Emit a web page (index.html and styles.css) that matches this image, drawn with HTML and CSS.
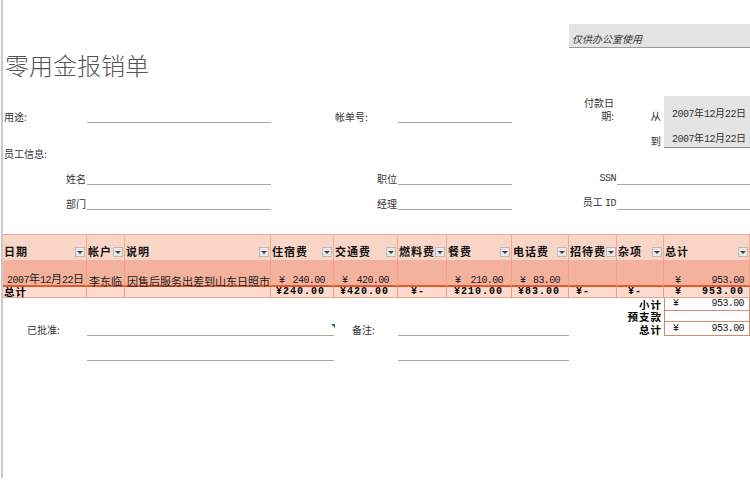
FILE: index.html
```html
<!DOCTYPE html>
<html lang="zh-CN">
<head>
<meta charset="utf-8">
<title>零用金报销单</title>
<link rel="stylesheet" href="styles.css">
</head>
<body>
<div class="sheet">
  <div class="row h24"></div>
  <div class="row h24">
    <div class="s8"></div>
    <div class="c s3 office">仅供办公室使用</div>
  </div>
  <div class="row h48">
    <div class="c s11 title">零用金报销单</div>
  </div>
  <div class="row h26">
    <div class="c lb l">用途:</div>
    <div class="c s2 line"></div>
    <div></div>
    <div class="c lb l">帐单号:</div>
    <div class="c s2 line"></div>
    <div></div>
    <div class="c lb r pay">付款日<br>期:</div>
    <div class="c lb r fr">从</div>
    <div class="c date"><span><span class="dg">2007</span>年<span class="dg">12</span>月<span class="dg">22</span>日</span></div>
  </div>
  <div class="row h26">
    <div class="s9"></div>
    <div class="c lb r fr">到</div>
    <div class="c date"><span><span class="dg">2007</span>年<span class="dg">12</span>月<span class="dg">22</span>日</span></div>
  </div>
  <div class="row h12">
    <div class="c s3 lb l">员工信息:</div>
  </div>
  <div class="row h25">
    <div class="c lb r">姓名</div>
    <div class="c s2 line"></div>
    <div></div>
    <div class="c lb r">职位</div>
    <div class="c s2 line"></div>
    <div></div>
    <div class="c lb r"><span class="mono">SSN</span></div>
    <div class="c s2 line"></div>
  </div>
  <div class="row h25">
    <div class="c lb r">部门</div>
    <div class="c s2 line"></div>
    <div></div>
    <div class="c lb r">经理</div>
    <div class="c s2 line"></div>
    <div></div>
    <div class="c lb r"><span>员工&nbsp;<span class="mono">ID</span></span></div>
    <div class="c s2 line"></div>
  </div>
  <div class="row h24"></div>

  <div class="row h26">
    <div class="c hd"><span>日期</span><span class="dd"></span></div>
    <div class="c hd"><span>帐户</span><span class="dd"></span></div>
    <div class="c hd"><span>说明</span><span class="dd"></span></div>
    <div class="c hd"><span>住宿费</span><span class="dd"></span></div>
    <div class="c hd"><span>交通费</span><span class="dd"></span></div>
    <div class="c hd"><span>燃料费</span><span class="dd"></span></div>
    <div class="c hd"><span>餐费</span><span class="dd"></span></div>
    <div class="c hd"><span>电话费</span><span class="dd"></span></div>
    <div class="c hd"><span>招待费</span><span class="dd"></span></div>
    <div class="c hd"><span>杂项</span><span class="dd"></span></div>
    <div class="c hd"><span>总计</span><span class="dd"></span></div>
  </div>
  <div class="row h27">
    <div class="c dt end"><span><span class="dg">2007</span>年<span class="dg">12</span>月<span class="dg">22</span>日</span></div>
    <div class="c dt">李东临</div>
    <div class="c dt">因售后服务出差到山东日照市</div>
    <div class="c dt money"><span class="m">¥</span><span class="m">240.00</span></div>
    <div class="c dt money"><span class="m">¥</span><span class="m">420.00</span></div>
    <div class="c dt"></div>
    <div class="c dt money"><span class="m">¥</span><span class="m">210.00</span></div>
    <div class="c dt money"><span class="m">¥</span><span class="m">83.00</span></div>
    <div class="c dt"></div>
    <div class="c dt"></div>
    <div class="c dt money last"><span class="m">¥</span><span class="m">953.00</span></div>
  </div>
  <div class="row h11">
    <div class="c tt">总计</div>
    <div class="c tt"></div>
    <div class="c tt"></div>
    <div class="c tt end"><span class="mb">¥240.00</span></div>
    <div class="c tt end"><span class="mb">¥420.00</span></div>
    <div class="c tt end dash"><span class="mb">¥-</span></div>
    <div class="c tt end"><span class="mb">¥210.00</span></div>
    <div class="c tt end"><span class="mb">¥83.00</span></div>
    <div class="c tt end dash2"><span class="mb">¥-</span></div>
    <div class="c tt end dash"><span class="mb">¥-</span></div>
    <div class="c tt money last"><span class="mb">¥</span><span class="mb">953.00</span></div>
  </div>
  <div class="row h12">
    <div class="s9"></div>
    <div class="c sl">小计</div>
    <div class="c sb"><span class="m">¥</span><span class="m">953.00</span></div>
  </div>
  <div class="row h12">
    <div class="s9"></div>
    <div class="c sl">预支款</div>
    <div class="c sb"></div>
  </div>
  <div class="row h14">
    <div class="c lb appr">已批准:</div>
    <div class="c s3 line tri"></div>
    <div class="c lb note">备注:</div>
    <div class="c s3 line"></div>
    <div></div>
    <div class="c sl">总计</div>
    <div class="c sb"><span class="m">¥</span><span class="m">953.00</span></div>
  </div>
  <div class="row h25">
    <div></div>
    <div class="c s3 line"></div>
    <div></div>
    <div class="c s3 line"></div>
  </div>
  <div class="row h117"></div>
</div>
</body>
</html>
```
FILE: styles.css
```css
* { box-sizing: border-box; }
html, body { margin: 0; padding: 0; background: #fff; }
body {
  font-family: "Noto Sans CJK SC", "Liberation Sans", sans-serif;
  font-size: 10px;
  color: #333;
}
.sheet {
  margin-left: 1px;
  width: 749px;
  height: 478px;
  border-left: 2px solid #c9c9c9;
}
.row {
  display: grid;
  grid-template-columns: 84px 38px 146px 63px 64px 49px 65px 57px 48px 47px 86px;
}
.h11 { height: 11px; }
.h12 { height: 12px; }
.h14 { height: 14px; }
.h24 { height: 24px; }
.h25 { height: 25px; }
.h26 { height: 26px; }
.h27 { height: 27px; }
.h48 { height: 48px; }
.h117 { height: 117px; }
.s2 { grid-column: span 2; }
.s3 { grid-column: span 3; }
.s8 { grid-column: span 8; }
.s9 { grid-column: span 9; }
.s11 { grid-column: span 11; }

.c {
  display: flex;
  align-items: flex-end;
  white-space: nowrap;
  min-width: 0;
  line-height: 12px;
}
.dg, .mono {
  font-family: "Liberation Mono", monospace;
  font-size: 10px;
  letter-spacing: -0.5px;
}
.office {
  background: #e4e4e4;
  border-bottom: 1px solid #9a9a9a;
  font-style: italic;
  color: #333;
  padding: 0 0 2px 3px;
}
.title {
  align-items: flex-start;
  font-size: 24px;
  line-height: 28px;
  font-weight: 300;
  color: #555;
  padding: 3px 0 0 2px;
}
.lb { color: #333; font-size: 10px; }
.l { padding-left: 1px; }
.r { justify-content: flex-end; padding-right: 1px; }
.pay { text-align: right; line-height: 13px; padding-right: 3px; padding-bottom: 1px; }
.fr { padding-right: 3px; font-size: 10.5px; padding-bottom: 1px; }
.line { border-bottom: 1px solid #a6a6a6; }
.date {
  background: #e4e4e4;
  border-bottom: 1px solid #8c8c8c;
  justify-content: flex-end;
  padding: 0 4px 1px 0;
  color: #333;
}
.appr { padding-left: 24px; padding-bottom: 0; }
.note { padding-left: 18px; }
.tri { position: relative; }
.tri::after {
  content: "";
  position: absolute;
  top: 2px;
  right: -1px;
  border-top: 4px solid #1e7b26;
  border-left: 4px solid transparent;
}

.hd {
  background: #f9d5c7;
  border-top: 1px solid #eeab91;
  border-right: 1px solid #eeab91;
  justify-content: space-between;
  padding: 0 1px 3px 1px;
  font-size: 11px;
  font-weight: bold;
  letter-spacing: 1px;
  color: #111;
}
.dd {
  width: 10px;
  height: 10px;
  flex: none;
  background: #e9e9e9;
  border: 1px solid #b9b9b9;
  display: flex;
  align-items: center;
  justify-content: center;
}
.dd::after {
  content: "";
  border-left: 3px solid transparent;
  border-right: 3px solid transparent;
  border-top: 3px solid #444;
}
.dt {
  background: #f4b29d;
  border-right: 1px solid #eda186;
  border-bottom: 2px solid #e5582a;
  font-size: 11px;
  line-height: 8px;
  color: #222;
  padding: 0 0 0 2px;
}
.end { justify-content: flex-end; padding-right: 8px; }
.dt.end { padding-right: 2px; }
.money { justify-content: space-between; padding: 0 8px 0 8px; }
.money.last { padding: 0 5px 0 11px; }
.m {
  font-family: "Liberation Mono", monospace;
  font-size: 10px;
  letter-spacing: -0.6px;
  color: #222;
}
.mb {
  font-family: "Liberation Mono", monospace;
  font-size: 10px;
  font-weight: bold;
  color: #000;
}
.tt {
  background: #fbdbcf;
  border-right: 1px solid #eda186;
  border-bottom: 1px solid #eda186;
  font-size: 10.5px;
  font-weight: bold;
  letter-spacing: 1px;
  line-height: 10px;
  color: #000;
  padding-left: 1px;
}
.tt.end { padding-right: 8px; }
.tt.dash { padding-right: 21px; }
.tt.dash2 { padding-right: 26px; }
.sl {
  justify-content: flex-end;
  align-items: center;
  padding-right: 2px;
  font-size: 10.5px;
  font-weight: bold;
  letter-spacing: 1px;
  line-height: 11px;
  color: #000;
}
.sb {
  border: 1px solid #d98a6c;
  border-top: none;
  align-items: center;
  justify-content: space-between;
  padding: 0 5px 0 8px;
}
```
